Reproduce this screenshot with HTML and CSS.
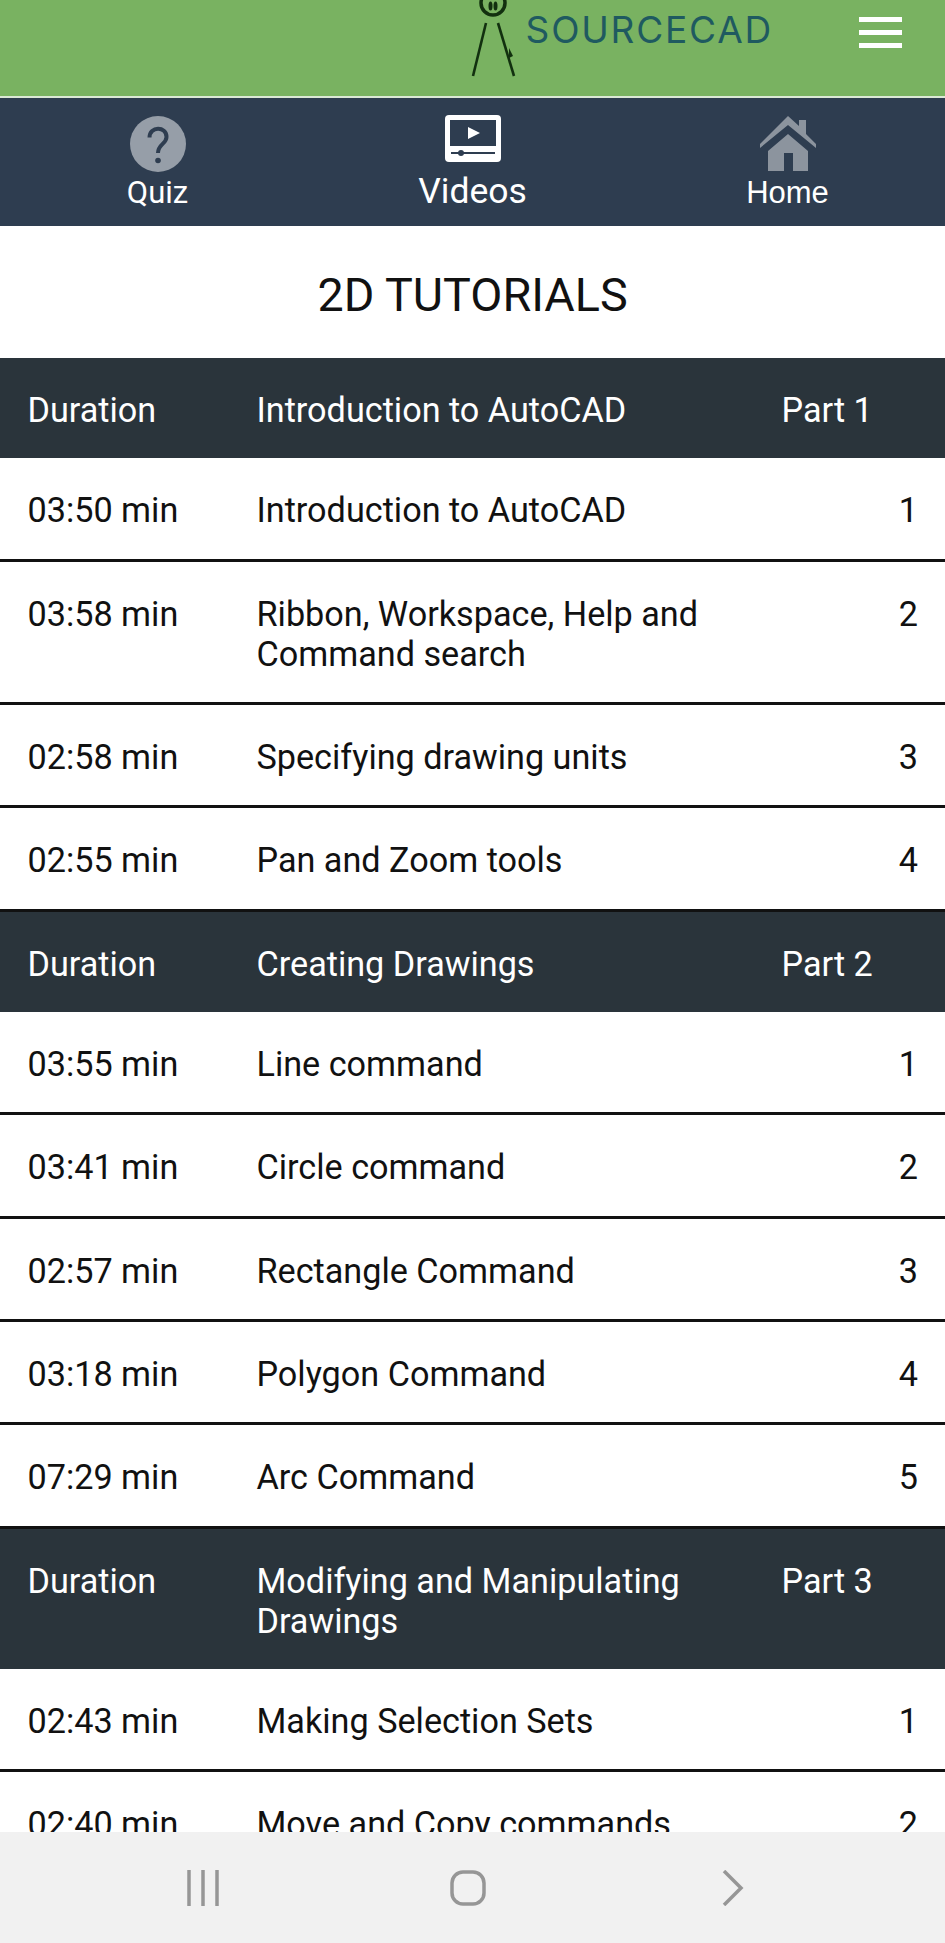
FILE: index.html
```html
<!DOCTYPE html>
<html lang="en">
<head>
<meta charset="utf-8">
<title>2D Tutorials - SourceCAD</title>
<link rel="stylesheet" href="styles.css">
</head>
<body>
<header class="topbar">
  <div class="brand">
    <svg class="compass" viewBox="0 0 50 80" width="50" height="80" aria-hidden="true">
      <circle cx="23" cy="3" r="12" fill="none" stroke="#12300f" stroke-width="3.5"/>
      <ellipse cx="20.5" cy="6" rx="2" ry="4.5" fill="#12300f"/>
      <ellipse cx="25.5" cy="6" rx="2" ry="4.5" fill="#12300f"/>
      <path d="M16 23 L3 76" stroke="#12300f" stroke-width="2.6" fill="none"/>
      <path d="M28 23 L44 76" stroke="#12300f" stroke-width="2.6" fill="none"/>
      <path d="M39 48 L43 56 L39 58 Z" fill="#12300f"/>
    </svg>
    <span class="wordmark">SOURCECAD</span>
  </div>
  <div class="burger"><span></span><span></span><span></span></div>
</header>

<nav class="tabs">
  <a class="tab">
    <svg class="tab-icon" viewBox="0 0 56 56" width="56" height="56" aria-hidden="true">
      <circle cx="28" cy="28" r="28" fill="#969ea8"/>
      <path d="M19.5 21.5 C19.5 10 36.5 10 36.5 21 C36.5 28 28 28 28 37" fill="none" stroke="#2e3d50" stroke-width="4"/>
      <circle cx="28" cy="44.5" r="2.8" fill="#2e3d50"/>
    </svg>
    <span class="tab-label">Quiz</span>
  </a>
  <a class="tab tab-active">
    <svg class="tab-icon" viewBox="0 0 56 47" width="56" height="47" aria-hidden="true">
      <rect width="56" height="47" rx="4" fill="#fff"/>
      <rect x="5" y="5" width="46" height="26" fill="#2e3d50"/>
      <path d="M23 12 L35 18 L23 24 Z" fill="#fff"/>
      <path d="M6 38 H50" stroke="#2e3d50" stroke-width="1.8"/>
      <circle cx="16" cy="38" r="3" fill="#2e3d50"/>
    </svg>
    <span class="tab-label tab-label-big">Videos</span>
  </a>
  <a class="tab">
    <svg class="tab-icon" viewBox="0 0 56 56" width="56" height="56" aria-hidden="true">
      <path d="M0 28 L28 0 L39 10 V4 H46 V18 L56 28 V32 L28 9 L0 32 Z" fill="#8c949e"/>
      <path d="M8 35 L28 18 L48 35 V55 H33 V37 H24 V55 H8 Z" fill="#8c949e"/>
    </svg>
    <span class="tab-label tab-label-home">Home</span>
  </a>
</nav>

<h1 class="title">2D TUTORIALS</h1>

<table class="lessons">
  <colgroup><col class="col-time"><col class="col-name"><col class="col-part"></colgroup>
  <thead>
    <tr class="head"><th>Duration</th><th>Introduction to AutoCAD</th><th>Part 1</th></tr>
  </thead>
  <tbody>
    <tr><td>03:50 min</td><td>Introduction to AutoCAD</td><td class="num">1</td></tr>
    <tr><td>03:58 min</td><td>Ribbon, Workspace, Help and Command search</td><td class="num">2</td></tr>
    <tr><td>02:58 min</td><td>Specifying drawing units</td><td class="num">3</td></tr>
    <tr><td>02:55 min</td><td>Pan and Zoom tools</td><td class="num">4</td></tr>
    <tr class="head"><th>Duration</th><th>Creating Drawings</th><th>Part 2</th></tr>
    <tr><td>03:55 min</td><td>Line command</td><td class="num">1</td></tr>
    <tr><td>03:41 min</td><td>Circle command</td><td class="num">2</td></tr>
    <tr><td>02:57 min</td><td>Rectangle Command</td><td class="num">3</td></tr>
    <tr><td>03:18 min</td><td>Polygon Command</td><td class="num">4</td></tr>
    <tr><td>07:29 min</td><td>Arc Command</td><td class="num">5</td></tr>
    <tr class="head"><th>Duration</th><th>Modifying and Manipulating Drawings</th><th>Part 3</th></tr>
    <tr><td>02:43 min</td><td>Making Selection Sets</td><td class="num">1</td></tr>
    <tr><td>02:40 min</td><td>Move and Copy commands</td><td class="num">2</td></tr>
  </tbody>
</table>

<footer class="sysnav">
  <svg viewBox="0 0 36 36" width="36" height="36" aria-hidden="true">
    <path d="M4 0 V36 M18 0 V36 M32 0 V36" stroke="#969696" stroke-width="3.5" fill="none"/>
  </svg>
  <svg class="sys-home" viewBox="0 0 36 36" width="36" height="36" aria-hidden="true">
    <rect x="2" y="2" width="32" height="32" rx="11" fill="none" stroke="#969696" stroke-width="3.5"/>
  </svg>
  <svg viewBox="0 0 22 36" width="22" height="36" aria-hidden="true">
    <path d="M2 1 L19 18 L2 35" stroke="#969696" stroke-width="3.5" fill="none"/>
  </svg>
</footer>
</body>
</html>
```

FILE: styles.css
```css
* { box-sizing: border-box; }
html, body { margin: 0; padding: 0; height: 100%; overflow: hidden; }
body { background: #fff; color: #111; font-family: Roboto, "Liberation Sans", sans-serif; }

.topbar {
  height: 98px;
  background: #79b261;
  border-bottom: 2px solid #dbe8d6;
  display: flex;
  align-items: flex-start;
  justify-content: flex-end;
  padding-right: 43px;
  overflow: hidden;
}
.brand { display: flex; align-items: flex-start; margin-right: 86px; }
.compass { display: block; }
.wordmark {
  margin: 10px 0 0 6px;
  font-family: Inter, "Liberation Sans", sans-serif;
  font-size: 37px;
  line-height: 40px;
  letter-spacing: 1.8px;
  color: #1f5a60;
}
.burger { display: flex; flex-direction: column; gap: 8px; margin-top: 17px; width: 43px; }
.burger span { display: block; height: 5px; background: #fff; }

.tabs {
  height: 128px;
  background: #2e3d50;
  display: grid;
  grid-template-columns: repeat(3, 1fr);
}
.tab { display: flex; flex-direction: column; align-items: center; padding-top: 18px; color: #fff; }
.tab-active { padding-top: 17px; }
.tab-icon { display: block; }
.tab-label { font-size: 31px; line-height: 34px; margin-top: 4px; }
.tab-label-big { font-size: 35.5px; line-height: 38px; margin-top: 10px; }
.tab-label-home { font-family: "Liberation Sans", sans-serif; }

.title {
  margin: 0;
  height: 132px;
  padding-top: 5px;
  display: flex;
  align-items: center;
  justify-content: center;
  font-size: 46.7px;
  font-weight: 400;
  color: #111;
  background: #fff;
}

.lessons {
  width: 100%;
  table-layout: fixed;
  border-collapse: collapse;
  font-size: 34.2px;
  line-height: 40.3px;
}
.col-time { width: 229px; }
.col-part { width: 191px; }
.lessons th, .lessons td {
  padding: 32px 0 28px 27.5px;
  text-align: left;
  font-weight: 400;
  vertical-align: top;
}
.lessons td:nth-child(2), .lessons th:nth-child(2) { padding-right: 40px; }
.lessons td { border-bottom: 3px solid #111; }
.lessons .num { text-align: right; padding-right: 27px; }
.head { background: #2a343b; color: #fff; }

.sysnav {
  position: fixed;
  left: 0;
  right: 0;
  bottom: 0;
  height: 111px;
  background: #f1f1f1;
  display: flex;
  align-items: center;
  padding-left: 185px;
}
.sys-home { margin: 0 236px 0 229px; }
```
